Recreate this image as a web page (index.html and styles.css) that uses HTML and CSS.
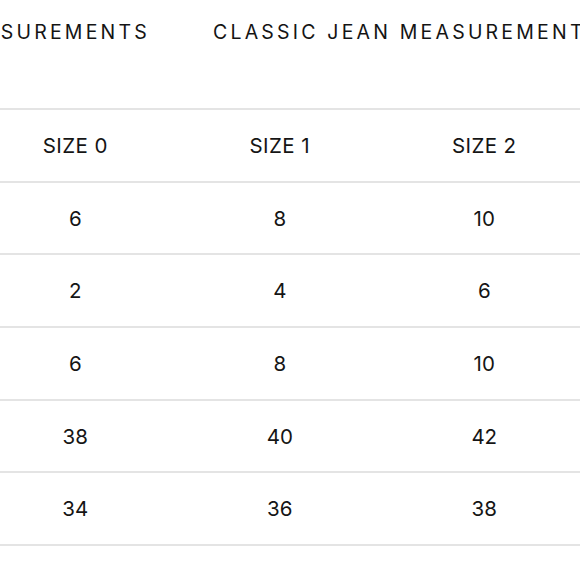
FILE: index.html
```html
<!DOCTYPE html>
<html lang="en">
<head>
<meta charset="utf-8">
<title>Size Guide</title>
<link rel="stylesheet" href="styles.css">
</head>
<body>
<div class="page">
  <div class="tabs">
    <div class="tab-left"><span class="tab">BODY MEASUREMENTS</span></div>
    <span class="tab">CLASSIC JEAN MEASUREMENTS</span>
  </div>
  <div class="table-wrap">
    <table class="sizes">
      <tr class="head"><td>SIZE 0</td><td>SIZE 1</td><td>SIZE 2</td><td>SIZE 3</td></tr>
      <tr><td>6</td><td>8</td><td>10</td><td>12</td></tr>
      <tr><td>2</td><td>4</td><td>6</td><td>8</td></tr>
      <tr><td>6</td><td>8</td><td>10</td><td>12</td></tr>
      <tr><td>38</td><td>40</td><td>42</td><td>44</td></tr>
      <tr><td>34</td><td>36</td><td>38</td><td>40</td></tr>
    </table>
  </div>
</div>
</body>
</html>
```
FILE: styles.css
```css
html, body {
  margin: 0;
  padding: 0;
  background: #fff;
}
body {
  font-family: Inter, "Noto Sans", sans-serif;
  color: #151515;
  overflow: hidden;
}
.page {
  width: 580px;
  overflow: hidden;
}
.tabs {
  display: flex;
  gap: 63px;
  height: 108px;
  padding-top: 20px;
  box-sizing: border-box;
  white-space: nowrap;
}
.tab-left {
  display: flex;
  justify-content: flex-end;
  width: 150px;
  flex: none;
}
.tab {
  font-size: 19.5px;
  letter-spacing: 3.2px;
  line-height: 24px;
  color: #141414;
}
.table-wrap {
  margin-left: -27px;
}
.sizes {
  border-collapse: collapse;
  table-layout: fixed;
  width: 818px;
}
.sizes td {
  width: 204.5px;
  height: 70.7px;
  padding: 0;
  text-align: center;
  vertical-align: middle;
  font-size: 20.5px;
  border-top: 2px solid #e4e4e4;
  border-bottom: 2px solid #e4e4e4;
}
.sizes .head td {
  letter-spacing: 0.4px;
}
```
